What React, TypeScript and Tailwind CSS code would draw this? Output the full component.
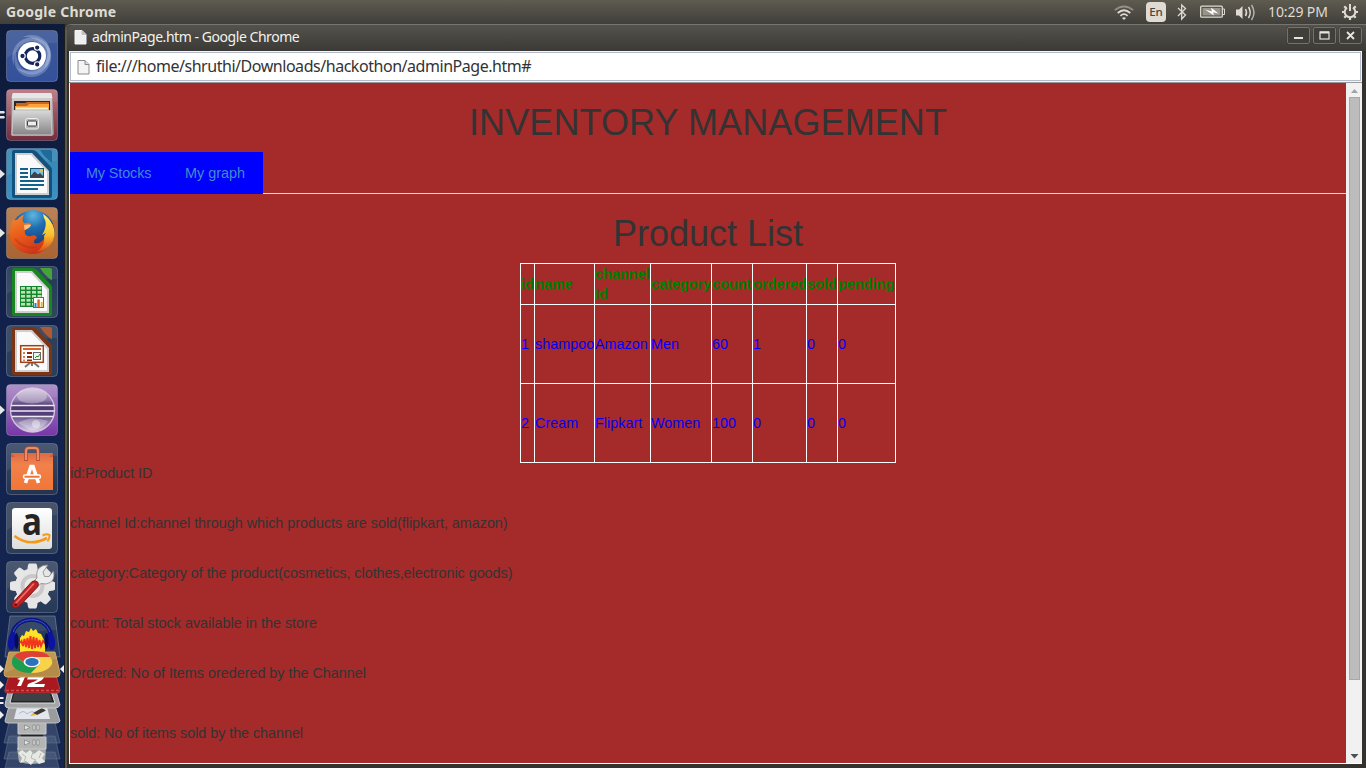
import React from "react";

type TileProps = {
  id: string;
  top: string;
  bottom: string;
  running?: 1 | 2;
  children: React.ReactNode;
};

function Tile({ id, top, bottom, running, children }: TileProps) {
  return (
    <div className="h-[59px] w-[64px] shrink-0">
      <svg width="64" height="59" viewBox="-6 0 64 59" className="block overflow-visible">
        <defs>
          <linearGradient id={id} x1="0" y1="0" x2="0" y2="1">
            <stop offset="0" stopColor={top} />
            <stop offset="1" stopColor={bottom} />
          </linearGradient>
        </defs>
        <rect x=".5" y=".5" width="51" height="51" rx="4" fill={`url(#${id})`} stroke="#fff" strokeOpacity=".22" />
        <path d="M1 4Q1 1 4 1H48Q51 1 51 4V13Q25 12 1 28Z" fill="#fff" opacity=".08" />
        {children}
        {running === 1 && <path d="M-6 21.5L-1 26L-6 30.5Z" fill="#e6e6e6" />}
        {running === 2 && <path d="M-6 22H-2L-1 23.2L-2 24.5H-6ZM-6 27H-2L-1 28.2L-2 29.5H-6Z" fill="#e6e6e6" />}
      </svg>
    </div>
  );
}

function Dash() {
  return (
    <Tile id="t-dash" top="#3c5796" bottom="#34519d">
      <g fill="#c3d3ee">
        <path d="M8 36C1 16 18 3 34 9C47 15 48 31 38 39C44 25 38 13 26 11C14 12 7 22 8 36Z" opacity=".34" />
        <path d="M17 7C33 0 48 13 44 29C40 45 24 50 10 38C28 45 41 36 42 24C41 15 31 7 17 7Z" opacity=".32" />
        <path d="M39 12C51 24 45 45 27 47C13 48 5 35 10 22C10 35 17 44 29 41C41 37 44 25 39 12Z" opacity=".3" />
      </g>
      <circle cx="26" cy="26" r="14" fill="#fff" />
      <circle cx="26.5" cy="26" r="7.3" fill="none" stroke="#14265a" strokeWidth="3.2" />
      <g stroke="#fff" strokeWidth="1.1">
        <circle cx="16.5" cy="26" r="2.7" fill="#14265a" />
        <circle cx="31.2" cy="17.6" r="2.7" fill="#14265a" />
        <circle cx="31.2" cy="34.4" r="2.7" fill="#14265a" />
      </g>
    </Tile>
  );
}

function Files() {
  return (
    <Tile id="t-files" top="#b87680" bottom="#742c3c" running={2}>
      <defs>
        <linearGradient id="cabinet" x1="0" y1="0" x2="0" y2="1">
          <stop offset="0" stopColor="#d8d8d8" />
          <stop offset="1" stopColor="#858585" />
        </linearGradient>
      </defs>
      <path d="M8 4H44Q46 4 46 6L48 44Q48 47 45 47H7Q4 47 5 44L6 6Q6 4 8 4Z" fill="url(#cabinet)" />
      <path d="M7 4H45L46.5 9H5.5Z" fill="#e6e6e6" />
      <path d="M8 12H44V23H8Z" fill="#30251f" />
      <path d="M10 14H19L21 13H43V21H10Z" fill="#c96621" />
      <path d="M9 17H21L23 15H43V22H9Z" fill="#ffa13d" />
      <path d="M10 18.5H42V20.5H10Z" fill="#fff1c2" />
      <path d="M7 21.5H45L46 46H6Z" fill="url(#cabinet)" stroke="#c9c9c9" />
      <rect x="19.5" y="29.5" width="13" height="10.5" rx="2" fill="#b4b4b4" stroke="#eee" />
      <rect x="21.5" y="32" width="9" height="5" rx="1" fill="#eee" stroke="#3d3d3d" />
    </Tile>
  );
}

function OfficePage({ color, light }: { color: string; light: string }) {
  return (
    <>
      <path d="M8 2H26Q29 2 31 4L45 19Q46 20 46 22V48Q46 50 44 50H8Q6 50 6 48V4Q6 2 8 2Z" fill={color} />
      <path d="M34 2H44Q46 2 46 4V14.5Q39 10 34 2Z" fill={light} />
      <path d="M9 5H26L43 23V47H9Z" fill="#cfcfcf" />
      <path d="M11 7H25L41 24V45H11Z" fill="#fafafa" />
    </>
  );
}

function Writer() {
  return (
    <Tile id="t-writer" top="#3686b5" bottom="#3b91c0" running={1}>
      <OfficePage color="#13527f" light="#1f6a98" />
      <path d="M14 20H22V22H14ZM14 24H22V26H14ZM14 28H22V30H14ZM14 32H38V34H14ZM14 36H38V38H14ZM14 40H32V42H14Z" fill="#11638d" />
      <rect x="24.5" y="20.5" width="13" height="9" fill="#77bde3" stroke="#125378" />
      <circle cx="35.3" cy="22.8" r="1.7" fill="#e5bd48" />
      <path d="M25 29V27.5L28.5 23.5L32 26.5L34 25L37 28V29Z" fill="#3b4249" />
    </Tile>
  );
}

function Firefox() {
  return (
    <Tile id="t-fox" top="#b57848" bottom="#a96432" running={1}>
      <defs>
        <radialGradient id="globe" cx=".5" cy=".12" r=".75">
          <stop offset="0" stopColor="#5fb6df" />
          <stop offset=".4" stopColor="#1f6db0" />
          <stop offset="1" stopColor="#123574" />
        </radialGradient>
        <linearGradient id="fox" x1="0" y1="0" x2=".5" y2="1">
          <stop offset="0" stopColor="#f08a30" />
          <stop offset=".5" stopColor="#e95c19" />
          <stop offset="1" stopColor="#cc3519" />
        </linearGradient>
        <linearGradient id="tail" x1="0" y1="0" x2="0" y2="1">
          <stop offset="0" stopColor="#fff06a" />
          <stop offset=".55" stopColor="#f9c02c" />
          <stop offset="1" stopColor="#df4b16" />
        </linearGradient>
      </defs>
      <circle cx="27" cy="24.5" r="21.5" fill="url(#globe)" />
      <path d="M7 12C8 14 10 13 12 12C13 10 16 8 18 8C16 11 16 14 18 16C21 16 25 15 25 18C23 20 22 22 19 23C18 27 21 30 25 29C28 27 31 29 31 31C27 33 26 38 33 36C39 33 41 27 40 20L47 17C50 30 43 45 29 47C14 48 3 38 4 26C4 21 5 17 7 12Z" fill="url(#fox)" />
      <path d="M37 7C44 11 49 20 48.5 27C48 37 40 44 31 45C37 40 39 35 38 29L40 26L36 28C40 22 41 15 38 11L37 7Z" fill="url(#tail)" />
      <path d="M18 18C20 18 23 17 25 18C24 21 21 22 18.5 23Z" fill="#ffc27f" />
      <path d="M9 32C15 39 22 42 31 40" fill="none" stroke="#b92d16" strokeWidth="2" opacity=".4" />
    </Tile>
  );
}

function Calc() {
  return (
    <Tile id="t-calc" top="#203858" bottom="#32455d">
      <OfficePage color="#198520" light="#45a338" />
      <rect x="14" y="20" width="22" height="21" fill="#168330" />
      <g fill="#b9e5ac">
        {[21, 25, 29, 33, 37].map((y) => [15, 20.5, 26, 31.5].map((x) => <rect key={`${x}-${y}`} x={x} y={y} width="4" height="2.6" />))}
      </g>
      <rect x="27.5" y="31.5" width="10" height="10" fill="#fff" stroke="#676767" />
      <path d="M28.5 37H30.5V41H28.5Z" fill="#1585c8" />
      <path d="M31.3 33.5H33.8V41H31.3Z" fill="#dd641d" />
      <path d="M34.7 36H36.7V41H34.7Z" fill="#e8b834" />
    </Tile>
  );
}

function Impress() {
  return (
    <Tile id="t-impress" top="#2c405c" bottom="#2b3e5b">
      <OfficePage color="#7c3417" light="#ad5a35" />
      <path d="M26 38V41M25 37L19 42M27 37L33 42" stroke="#777" strokeWidth="2" />
      <rect x="14.7" y="20.7" width="22.6" height="16.6" fill="#fff" stroke="#9c4216" strokeWidth="1.5" />
      <path d="M17 23H35V25H17Z" fill="#d46429" />
      <path d="M17 27H19V29H17ZM17 31H19V33H17ZM17 34.5H19V36H17Z" fill="#d77c4d" />
      <path d="M21 27H26V29H21ZM21 31H26V33H21ZM21 34.5H26V36H21Z" fill="#8b2f0b" />
      <rect x="27.5" y="27.5" width="7" height="7" fill="#f1f6eb" stroke="#666" />
      <path d="M29 33L31 31L32 32L34 29" fill="none" stroke="#288a2c" />
    </Tile>
  );
}

function Eclipse() {
  return (
    <Tile id="t-eclipse" top="#a988c4" bottom="#7837a7" running={1}>
      <defs>
        <linearGradient id="orb" x1="0" y1="0" x2="0" y2="1">
          <stop offset="0" stopColor="#cdbfdb" />
          <stop offset=".28" stopColor="#8d78a8" />
          <stop offset=".4" stopColor="#4c376c" />
          <stop offset=".6" stopColor="#54407a" />
          <stop offset="1" stopColor="#ddd0ea" />
        </linearGradient>
      </defs>
      <circle cx="26.5" cy="26" r="22" fill="url(#orb)" stroke="#d4c3e0" strokeWidth="1.3" />
      <ellipse cx="26" cy="12" rx="15" ry="7.5" fill="#fff" opacity=".3" />
      <path d="M12 39Q25 31 42 37Q35 46.500 25 46.500Z" fill="#fff" opacity=".3" />
      <circle cx="30" cy="40" r="4" fill="#fff" opacity=".4" />
      <path d="M5 21.500H48.500M5 27H48.500M6 32.500H47.500" stroke="#efe8f5" strokeWidth="1.5" />
    </Tile>
  );
}

function SoftwareCenter() {
  return (
    <Tile id="t-software" top="#3a4a67" bottom="#25344e">
      <defs>
        <linearGradient id="bag" x1="0" y1="0" x2="0" y2="1">
          <stop offset="0" stopColor="#dc6a45" />
          <stop offset=".3" stopColor="#f1814b" />
          <stop offset="1" stopColor="#f17636" />
        </linearGradient>
      </defs>
      <path d="M5 10H47V47H5Z" fill="url(#bag)" />
      <path d="M5 10L9 14H43L47 10V14H5Z" fill="#b84c34" opacity=".5" />
      <path d="M20 18V8Q20 5 23 5H29Q32 5 32 8V18" fill="none" stroke="#b04d35" strokeWidth="3.5" />
      <path d="M20 17V8Q20 5 23 5H29Q32 5 32 8V17" fill="none" stroke="#ef8a63" strokeWidth="2" />
      <g fill="none" stroke="#fff">
        <path d="M19.500 40L25 23.500H27L32.500 40" strokeWidth="3.6" />
        <rect x="17.500" y="32" width="17" height="3.5" rx="1.700" fill="#f17636" strokeWidth="1.5" />
      </g>
    </Tile>
  );
}

function Amazon() {
  return (
    <Tile id="t-amazon" top="#38465e" bottom="#2d3e58">
      <defs>
        <linearGradient id="az" x1="0" y1="0" x2="0" y2="1">
          <stop offset="0" stopColor="#fff" />
          <stop offset="1" stopColor="#dedede" />
        </linearGradient>
      </defs>
      <rect x="6" y="6" width="40" height="41" rx="3" fill="url(#az)" />
      <text x="16" y="33" fontFamily="Open Sans, sans-serif" fontSize="37" fontWeight="700" fill="#242424" textLength="20" lengthAdjust="spacingAndGlyphs">a</text>
      <path d="M8.500 34Q24 45.500 41 36" fill="none" stroke="#f59a16" strokeWidth="2.6" />
      <path d="M36.500 33.500Q41 31.500 43.500 33Q44 36 41.500 39.500" fill="none" stroke="#f59a16" strokeWidth="2" />
    </Tile>
  );
}

function Settings() {
  return (
    <Tile id="t-settings" top="#3c4a64" bottom="#263957">
      <g fill="#e6e6e6">
        {[0, 45, 90, 135, 180, 225, 270, 315].map((a) => (
          <path key={a} d="M22 4L23 2.500H30L31 4L32 11H21Z" transform={`rotate(${a} 26.5 25)`} />
        ))}
        <circle cx="26.500" cy="25" r="17.500" />
      </g>
      <circle cx="26.500" cy="25" r="12" fill="#c8c8c8" />
      <circle cx="26.500" cy="25" r="8" fill="#e9e9e9" />
      <path d="M28 20L31 17Q29 8 37 4.500L42 4L37 11L38.500 15.500L43 15.500L47.500 10Q50 21 40 23L35 22.500L31 26Z" fill="#ececec" stroke="#888" strokeWidth=".8" />
      <path d="M7 41.500L26 20.500Q30 18.500 32 21.500Q33 24 31.500 26L13 45.500Q10 48.500 7 46Q5 44 7 41.500Z" fill="#be2226" stroke="#841719" />
      <path d="M9.500 42.500L28 22.500" stroke="#ef7065" strokeWidth="1.700" />
      <circle cx="9.800" cy="43.800" r="1.300" fill="#5e0d10" />
    </Tile>
  );
}

function FoldedIcons() {
  return (
    <svg width="64" height="153" viewBox="0 615 64 153" className="block shrink-0">
      <path d="M10 616H55L60 657H5Z" fill="#273a5c" stroke="#62718d" strokeWidth=".8" />
      <path d="M10 616H55L57 630Q30 630 8 641Z" fill="#fff" opacity=".08" />
      <path d="M12 640C10 613 53 613 51 640" fill="none" stroke="#0b1580" strokeWidth="4" />
      <path d="M12.500 637C13 614 50 614 50.500 637" fill="none" stroke="#4257cc" strokeWidth="1" />
      <path d="M20 652V638L22 635L24 636L26 631L29 632L31 628L33 631L36 629L38 633L41 634L43 638L45 642V652Z" fill="#ffe128" />
      <path d="M20 643L21.500 641L23 646L24.500 639L26 647L27.500 638L29 648L30.500 636L32 649L33.500 637L35 648L36.500 638L38 647L39.500 640L41 646L43 641L45 643" fill="none" stroke="#f2361d" strokeWidth="1.900" />
      <ellipse cx="12" cy="641" rx="4" ry="9" fill="#0b13a0" transform="rotate(8 12 641)" />
      <ellipse cx="51" cy="641" rx="4" ry="9" fill="#0b13a0" transform="rotate(-8 51 641)" />
      <ellipse cx="16.500" cy="641" rx="2" ry="8" fill="#060b58" />
      <ellipse cx="46.500" cy="641" rx="2" ry="8" fill="#060b58" />
      <g fill="#5c6d8c" fillOpacity=".45" stroke="#6f7f9b" strokeOpacity=".6" strokeWidth=".8">
        <path d="M9 722H55L60 743H4Z" />
        <path d="M9 736H55L60 759H4Z" />
        <path d="M9 752H55L59 768H5Z" />
      </g>
      <path d="M17 748H46L45 762Q32 766 19 762Z" fill="#a9aca8" />
      <path d="M18 753L22 750L26 753L30 750L34 754L39 750L45 754L42 758L45 762L39 764L35 760L31 765L26 761L20 763L22 758Z" fill="#e7e9e5" />
      <path d="M22 754L26 757L24 761M33 752L31 758L36 760M41 753L39 758" fill="none" stroke="#b6bab5" />
      <path d="M21 734H43V738H21Z" fill="#202329" />
      <path d="M18 737H46V749H18Z" fill="#b3b4b4" stroke="#cbcccc" />
      <path d="M18 721H46V734H18Z" fill="#b3b4b4" stroke="#cbcccc" />
      <path d="M24.500 725V730L30 727.500ZM33 725H35V730H33ZM37 725H39V730H37ZM24.500 740V745L30 742.500ZM33 740H35V745H33ZM37 740H39V745H37Z" fill="#e3e4e4" stroke="#777" strokeWidth=".6" />
      <path d="M9 706H55L60 721Q59 723 56 723H8Q5 723 5 721Z" fill="#9b9c9e" stroke="#c1c2c3" />
      <path d="M17 707H47L50 719H14Z" fill="#e3e6ea" />
      <path d="M19 714Q23 709 27 714Q32 710 35 713" fill="none" stroke="#a8b9dc" />
      <path d="M33 713L42 708L46 710.500L37 715Z" fill="#3c3934" />
      <path d="M30 716L33 713L37 715Z" fill="#e2b44f" />
      <path d="M8 691H56L60 705Q59 708 55 708H9Q5 708 5 705Z" fill="#a5a6a8" stroke="#cacaca" />
      <path d="M13 691H51L55 703H10Z" fill="#202227" stroke="#dcdcdc" strokeWidth="1" />
      <path d="M14 694H50L52 701H12Z" fill="#3e4044" />
      <path d="M9 675H56L60 690Q60 693 57 693H8Q4 693 5 690Z" fill="#a9191f" stroke="#b63b41" />
      <path d="M6 690.500H59" fill="none" stroke="#ce4e52" strokeWidth="1.400" strokeDasharray="3 2" />
      <path d="M17 679L21 677H25L21 686H17L20 680ZM28 677H44Q44 680 34 684H45L44 687H27L28 684Q36 681 38 679.500H27Z" fill="#fff" />
      <path d="M9 652H55L60 673Q60 677 57 677H7Q4 677 4 673Z" fill="#b58b49" stroke="#cda763" />
      <path d="M5 669L9 652H55L57 659Q30 660 5 673Z" fill="#e1bd7e" opacity=".28" />
      <path d="M14 656C11 660 11 666 16 669Q21 673 31 673L38 665L30 665L23 662Z" fill="#1d9d4e" />
      <path d="M14 656Q18 651 32 651Q46 651 50 657H32L24 662Z" fill="#df4034" />
      <path d="M33 657H50Q55 663 49 668Q43 673 31 673L40 664Q42 659 33 657Z" fill="#f8d348" />
      <ellipse cx="32" cy="662" rx="8.500" ry="5.200" fill="#f3f3f3" />
      <ellipse cx="32" cy="662" rx="6.700" ry="4" fill="#2873ba" />
      <path d="M0 665L4 669L0 673ZM64 665L60 669L64 673ZM0 681L4 685L0 689ZM0 697H3L4 698L3 699H0ZM0 702H3L4 703L3 704H0ZM0 711L4 715L0 719Z" fill="#eee" />
    </svg>
  );
}

function PageGlyph({ light }: { light?: boolean }) {
  return (
    <svg width="13" height="16" viewBox="0 0 13 16" className="shrink-0">
      <path d="M1 1.5H8L12 5.5V15H1Z" fill={light ? "#eee" : "#f4f4f4"} stroke={light ? "#f4f4f4" : "#8b8b8b"} />
      <path d="M8 1.5V5.5H12" fill={light ? "#bbb" : "#ddd"} stroke={light ? "#c5c5c5" : "#8b8b8b"} />
    </svg>
  );
}

function SystemTray() {
  return (
    <div className="flex h-6 items-center text-[#dfdbd2]">
      <svg width="20" height="16" viewBox="0 0 20 16" fill="none" stroke="currentColor" strokeWidth="1.7">
        <path d="M.8 6.2Q10-1.2 19.2 6.2" opacity=".45" />
        <path d="M3.7 9Q10 3.500 16.300 9M6.400 11.800Q10 8.500 13.600 11.800" />
        <path d="M8 14Q10 12.300 12 14L10 16Z" fill="currentColor" stroke="none" />
      </svg>
      <div className="ml-3 flex h-5 w-5 items-center justify-center rounded-sm bg-[#dfdbd2] font-['Noto_Sans',sans-serif] text-[11.5px] leading-none font-medium text-[#45433e]">En</div>
      <svg width="10" height="18" viewBox="0 0 10 18" className="ml-[11px]" fill="none" stroke="currentColor" strokeWidth="1.3">
        <path d="M1 5L8.500 12L4.700 16V2L8.500 5.500L1 13" />
      </svg>
      <svg width="25" height="14" viewBox="0 0 25 14" className="ml-[13px]">
        <rect x=".7" y="1.200" width="21.600" height="11" rx="1" fill="none" stroke="currentColor" strokeWidth="1.3" />
        <rect x="2.500" y="3" width="18" height="7.500" fill="#97948c" />
        <path d="M22.500 4H24.500V9.500H22.500" fill="none" stroke="currentColor" />
        <path d="M5 4.500L12 6.500L11 2.500L18.500 8.500L13 7.200L14 10.500Z" fill="#fff" />
      </svg>
      <svg width="21" height="18" viewBox="0 0 21 18" className="ml-[11px]" fill="none" stroke="currentColor" strokeWidth="1.5">
        <path d="M0 6.500H3L6.500 3V16L3 12.500H0Z" fill="currentColor" stroke="none" />
        <path d="M9.500 6Q11.500 9.500 9.500 13M12.500 4Q16 9.500 12.500 15" />
        <path d="M15.500 2Q20.500 9.500 15.500 17" opacity=".7" />
      </svg>
      <span className="ml-[11px] w-[61px] font-['Noto_Sans',sans-serif] text-[14px] leading-6 tracking-[-0.1px] whitespace-nowrap">10:29 PM</span>
      <svg width="18" height="18" viewBox="0 0 18 18" className="ml-3" fill="none" stroke="currentColor">
        <path d="M6 4.600A5.300 5.300 0 1 0 12 4.600" strokeWidth="2" />
        <path d="M9 1V8" strokeWidth="2" />
        <path d="M1 9H4M14 9H17M3.300 3.300L5.200 5.200M14.700 3.300L12.800 5.200M3.300 14.700L5.200 12.800M14.700 14.700L12.800 12.800M9 14V17" strokeWidth="2.200" />
      </svg>
    </div>
  );
}

function WindowButton({ children }: { children: React.ReactNode }) {
  return (
    <div className="flex h-[17px] w-[23px] items-center justify-center rounded-[2px] border border-[#75736c] bg-[#403f3a] shadow-[0_0_1px_#222]">
      <svg width="11" height="11" viewBox="0 0 11 11" fill="none" stroke="#e8e5de" className="shrink-0">{children}</svg>
    </div>
  );
}

const columns = [
  { label: "id", width: "w-[14px]" },
  { label: "name", width: "w-[60px]" },
  { label: "channel Id", width: "w-[56px]" },
  { label: "category", width: "w-[61px]" },
  { label: "count", width: "w-[41px]" },
  { label: "ordered", width: "w-[54px]" },
  { label: "sold", width: "w-[31px]" },
  { label: "pending", width: "w-[58px]" },
];

const products = [
  ["1", "shampoo", "Amazon", "Men", "60", "1", "0", "0"],
  ["2", "Cream", "Flipkart", "Women", "100", "0", "0", "0"],
];

function ProductTable() {
  return (
    <table className="mx-auto mt-[9px] w-[376px] table-fixed border-collapse text-left text-[14.4px] leading-5">
      <colgroup>
        {columns.map((c) => <col key={c.label} className={c.width} />)}
      </colgroup>
      <thead>
        <tr className="h-[41px]">
          {columns.map((c) => (
            <th key={c.label} className="border border-white p-0 font-bold text-[#008000]">{c.label}</th>
          ))}
        </tr>
      </thead>
      <tbody>
        {products.map((row) => (
          <tr key={row[0]} className="h-[79px]">
            {row.map((cell, i) => (
              <td key={i} className="border border-white p-0 text-[#0000ff]">{cell}</td>
            ))}
          </tr>
        ))}
      </tbody>
    </table>
  );
}

function InventoryPage() {
  return (
    <main className="h-[680px] w-[1276px] overflow-hidden bg-[#a52a2a] font-['Liberation_Sans',Arial,sans-serif] text-[14.4px] leading-5 text-[#333]">
      <h1 className="mt-5 text-center text-[36px] leading-[39px] tracking-[0.1px]">INVENTORY MANAGEMENT</h1>
      <nav className="mt-[10px] flex h-[42px] border-b border-[#ddd]">
        <div className="flex h-[42px] w-[193px] shrink-0 bg-[#0000ff] pt-[11px] pl-4 text-[#428bca]">
          <a className="w-[99px] tracking-[-0.12px]">My Stocks</a>
          <a>My graph</a>
        </div>
      </nav>
      <h1 className="mt-5 text-center text-[36px] leading-10">Product List</h1>
      <ProductTable />
      <p className="tracking-[-0.07px]">id:Product ID</p>
      <p className="mt-[30px] tracking-[-0.035px]">channel Id:channel through which products are sold(flipkart, amazon)</p>
      <p className="mt-[30px] tracking-[-0.045px]">category:Category of the product(cosmetics, clothes,electronic goods)</p>
      <p className="mt-[30px]">count: Total stock available in the store</p>
      <p className="mt-[30px] tracking-[-0.02px]">Ordered: No of Items oredered by the Channel</p>
      <p className="mt-10 tracking-[-0.06px]">sold: No of items sold by the channel</p>
    </main>
  );
}

export default function App() {
  return (
    <div className="flex h-[768px] w-[1366px] flex-col overflow-hidden bg-[#3c3b37]">
      <header className="flex h-6 shrink-0 items-center justify-between bg-linear-to-b from-[#5e5b50] to-[#413f3a] pr-[7px] pl-[6px]">
        <span className="font-['Noto_Sans',sans-serif] text-[14px] leading-6 font-bold tracking-[0.22px] text-[#dfdbd2]">Google Chrome</span>
        <SystemTray />
      </header>
      <div className="flex h-[744px]">
        <aside className="flex w-[65px] shrink-0 flex-col border-r border-[#1b1c20] bg-linear-to-b from-[#0d1a3a] via-[#132350] to-[#14264e] pt-[6px]">
          <Dash />
          <Files />
          <Writer />
          <Firefox />
          <Calc />
          <Impress />
          <Eclipse />
          <SoftwareCenter />
          <Amazon />
          <div className="h-[54px] shrink-0"><Settings /></div>
          <FoldedIcons />
        </aside>
        <section className="flex w-[1301px] flex-col rounded-tl-md border-t border-l-2 border-t-[#77756d] border-l-[#5b584f] bg-[#33322e]">
          <div className="flex h-[26px] shrink-0 items-start justify-between rounded-tl-md bg-linear-to-b from-[#53524c] to-[#3b3a36] pr-1 pl-[7px]">
            <div className="flex h-6 items-center">
              <PageGlyph light />
              <span className="ml-[5px] font-['Noto_Sans',sans-serif] text-[14px] leading-5 tracking-[-0.45px] text-[#f4f2ec]">adminPage.htm - Google Chrome</span>
            </div>
            <div className="flex gap-[3px] pt-[2px]">
              <WindowButton><path d="M1 8H10" strokeWidth="2" /></WindowButton>
              <WindowButton><rect x="1" y="2" width="9" height="7" strokeWidth="1.2" /><path d="M1 2.500H10" strokeWidth="2" /></WindowButton>
              <WindowButton><path d="M2 2L9 9M9 2L2 9" strokeWidth="1.8" /></WindowButton>
            </div>
          </div>
          <div className="ml-[2px] flex h-[32px] w-[1293px] shrink-0 flex-col border-b border-[#999] bg-[#f5f5f5] pt-px pr-px pl-px">
            <div className="flex h-[29px] items-center border border-[#b5bccb] bg-white pl-[6px]">
              <PageGlyph />
              <span className="mb-[2px] ml-[6px] font-['Noto_Sans',sans-serif] text-[16px] leading-6 tracking-[-0.46px] text-[#333]">file:///home/shruthi/Downloads/hackothon/adminPage.htm#</span>
            </div>
          </div>
          <div className="ml-[2px] flex h-[681px] w-[1293px] shrink-0 border-b border-l border-white">
            <InventoryPage />
            <div className="flex w-4 flex-col items-center bg-[#f1f1f1]">
              <svg width="15" height="14" viewBox="0 0 15 14" className="shrink-0"><path d="M4 10L7.500 6L11 10Z" fill="#a3a3a3" /></svg>
              <div className="h-[583px] w-[11px] shrink-0 border border-[#a8a8a8] bg-[#bcbcbc]" />
              <svg width="15" height="15" viewBox="0 0 15 15" className="mt-auto shrink-0"><path d="M3.500 6H11.500L7.500 10.500Z" fill="#505050" /></svg>
            </div>
          </div>
        </section>
      </div>
    </div>
  );
}
